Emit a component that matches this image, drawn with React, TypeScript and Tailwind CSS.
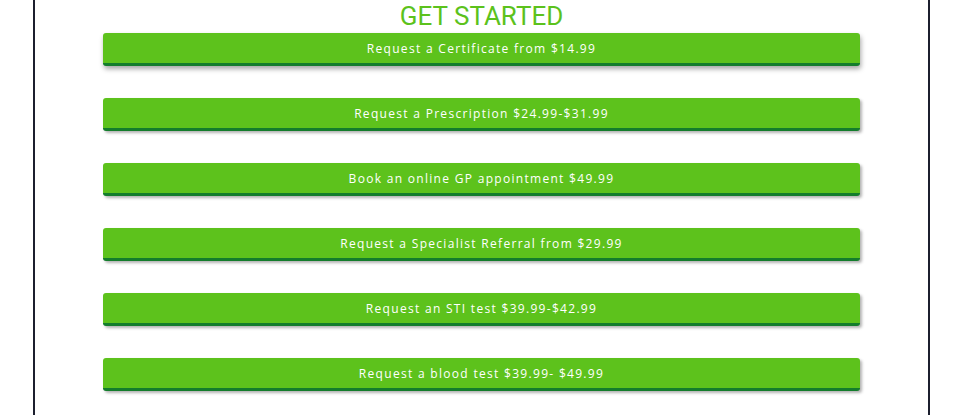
const buttons = [
  "Request a Certificate from $14.99",
  "Request a Prescription $24.99-$31.99",
  "Book an online GP appointment $49.99",
  "Request a Specialist Referral from $29.99",
  "Request an STI test $39.99-$42.99",
  "Request a blood test $39.99- $49.99",
];

export default function App() {
  return (
    <div className="w-[965px] h-[415px] overflow-hidden bg-white">
      <div className="ml-[33px] w-[897px] h-full border-x-2 border-[#1c1f2e] px-[68px]">
        <h2
          className="text-center text-[26px] leading-[32px] text-[#5cc21c] font-normal"
          style={{ fontFamily: "Roboto, sans-serif" }}
        >
          GET STARTED
        </h2>
        <div className="flex flex-col gap-[32px] mt-[1px]">
          {buttons.map((label, i) => (
            <button
              key={label}
              className={
                "w-full h-[33px] pt-[1px] rounded-[3px] bg-[#5dc21c] border-b-[3px] border-[#137d2c] text-white text-[12px] tracking-[1.3px] " +
                (i === 0
                  ? "shadow-[1px_3px_5px_rgba(0,0,0,0.35)]"
                  : "shadow-[2px_2px_3px_rgba(0,0,0,0.3)]")
              }
              style={{ fontFamily: "'Open Sans', sans-serif" }}
            >
              {label}
            </button>
          ))}
        </div>
      </div>
    </div>
  );
}
